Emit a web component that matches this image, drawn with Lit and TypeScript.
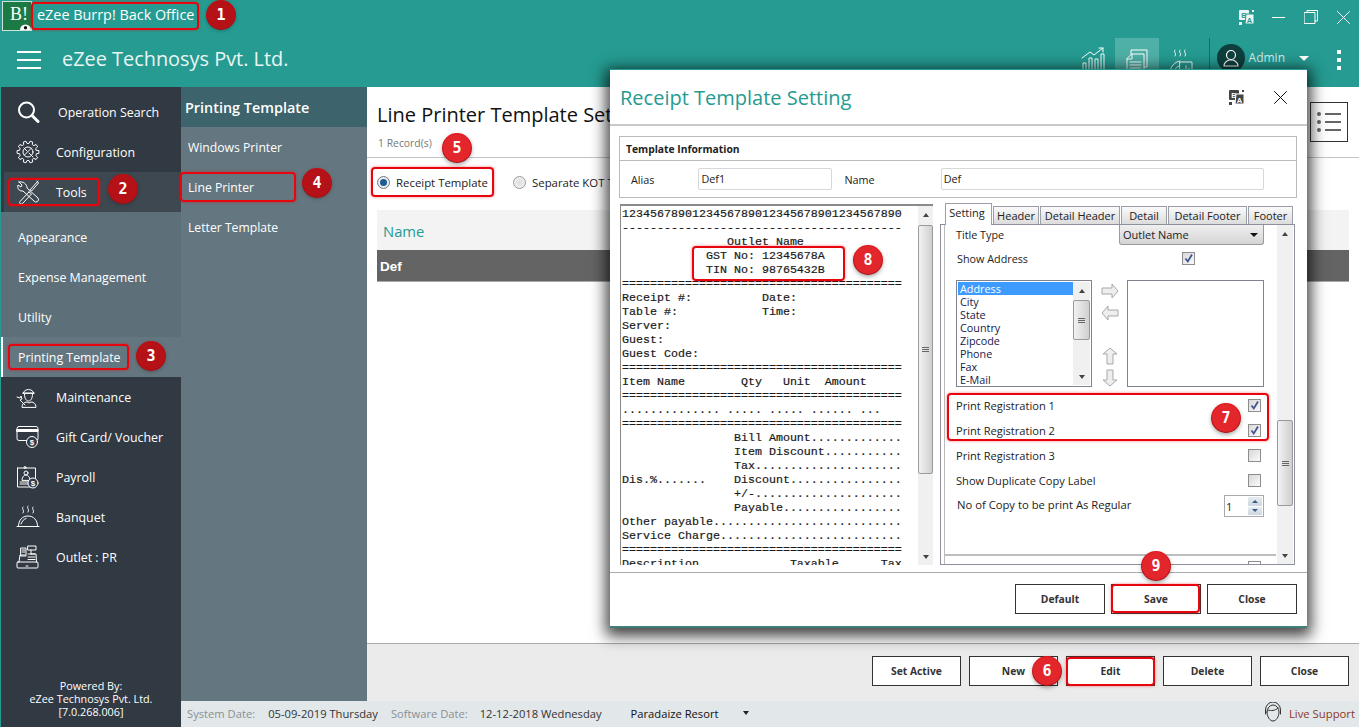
import { LitElement, html, css, svg } from "lit";
import { customElement } from "lit/decorators.js";

const eq = "=".repeat(40);
const RECEIPT = [
  "1234567890123456789012345678901234567890",
  "-".repeat(40),
  "               Outlet Name",
  "            GST No: 12345678A",
  "            TIN No: 98765432B",
  eq,
  "Receipt #:          Date:",
  "Table #:            Time:",
  "Server:",
  "Guest:",
  "Guest Code:",
  eq,
  "Item Name        Qty   Unit  Amount",
  eq,
  ".............. ..... ..... ...... ...",
  eq,
  "                Bill Amount.............",
  "                Item Discount...........",
  "                Tax.....................",
  "Dis.%.......    Discount................",
  "                +/-.....................",
  "                Payable.................",
  "Other payable...........................",
  "Service Charge..........................",
  eq,
  "Description             Taxable      Tax",
].join("\n");

const NAV_TOP = ["Operation Search", "Configuration", "Tools"];
const NAV_SUB = ["Appearance", "Expense Management", "Utility"];
const NAV_BOTTOM = ["Maintenance", "Gift Card/ Voucher", "Payroll", "Banquet", "Outlet : PR"];
const LIST = ["Address", "City", "State", "Country", "Zipcode", "Phone", "Fax", "E-Mail"];
const TABS = ["Setting", "Header", "Detail Header", "Detail", "Detail Footer", "Footer"];

const MARKS = [
  { n: 1, x: 31, y: 2, w: 168, h: 28, cx: 221, cy: 15, dark: true },
  { n: 2, x: 8, y: 178, w: 92, h: 28, cx: 123, cy: 189, dark: true },
  { n: 3, x: 8, y: 344, w: 121, h: 26, cx: 151, cy: 356, dark: true },
  { n: 4, x: 180, y: 172, w: 116, h: 30, cx: 317, cy: 183, dark: true },
  { n: 5, x: 371, y: 167, w: 123, h: 30, cx: 457, cy: 148, dark: false },
  { n: 6, x: 1066, y: 657, w: 89, h: 29, cx: 1047, cy: 671, dark: false },
  { n: 7, x: 947, y: 393, w: 322, h: 48, cx: 1226, cy: 418, dark: false },
  { n: 8, x: 692, y: 246, w: 153, h: 35, cx: 868, cy: 260, dark: false },
  { n: 9, x: 1111, y: 584, w: 89, h: 29, cx: 1156, cy: 566, dark: false },
];

function gearPath(cx: number, cy: number, r1: number, r2: number, teeth: number) {
  const pts: string[] = [];
  const step = (Math.PI * 2) / teeth;
  for (let i = 0; i < teeth; i++) {
    const a = i * step;
    [[-0.32, r1], [-0.2, r2], [0.2, r2], [0.32, r1]].forEach(([o, r]) => {
      const t = a + (o as number) * step;
      pts.push(`${(cx + (r as number) * Math.cos(t)).toFixed(2)},${(cy + (r as number) * Math.sin(t)).toFixed(2)}`);
    });
  }
  return pts.join(" ");
}

const ico = (w: number, h: number, body: unknown) => html`<svg class="ico" width=${w} height=${h} viewBox="0 0 ${w} ${h}">${body}</svg>`;

const ICONS: Record<string, unknown> = {
  "Operation Search": ico(24, 24, svg`<circle cx="10.5" cy="10" r="7.5" stroke-width="2"/><path d="M16 15.5l6 6" stroke-width="3"/>`),
  Configuration: ico(24, 24, svg`<polygon points=${gearPath(12, 12, 8.6, 11, 10)}/><circle cx="12" cy="12" r="5"/><path d="M8 8l3 3M13 13l4 4M15.5 8l-7 7"/>`),
  Tools: ico(24, 24, svg`<path d="M22 1l-8 9M13 12l-9 9.5a1.6 1.6 0 0 0 2.5 2l9-9.5-2.5-2zM14.5 10l1 1 7-8-1.500-2"/><path d="M3 2l3 3-1 2-3-2c-1 3 1 6 4 6l1 0 11 10a2.500 2.500 0 0 0 4-3L11 8c0-4-4-7-8-6z"/>`),
  Maintenance: ico(24, 24, svg`<path d="M7 8a6 6 0 0 1 11 0zM7 8h11M8.500 9c0 5 2 7 4 7s4-2 4-7"/><path d="M6 22c0-3 2-5 5-5l2 1 2-1c3 0 5 2 5 5zM1 12l3 1 1-2 1 3-2 1 5 5"/>`),
  "Gift Card/ Voucher": ico(24, 24, svg`<rect x="1" y="1.500" width="21" height="14" rx="2"/><rect x="1" y="4.500" width="21" height="2" fill="#fff"/><circle cx="16" cy="17" r="5.500" fill="#313942"/><text x="16" y="20" class="ico-t">$</text>`),
  Payroll: ico(24, 24, svg`<path d="M1.500 3h18v11M1.500 3v19h14"/><circle cx="9" cy="2.500" r="1"/><circle cx="10" cy="8" r="2"/><path d="M6 15c0-3 2-5 4-5s4 2 4 5zM4 17h9M4 19h9"/><circle cx="17" cy="18" r="5" fill="#313942"/><text x="17" y="21" class="ico-t">$</text>`),
  Banquet: ico(24, 24, svg`<path d="M1 21.500h22M2.500 21c0-6 4-10 9.500-10s9.500 4 9.500 10M5 19c1-3 3-5 5-5.500"/><path d="M7 2c-2 2 2 3 0 6M12 1c-2 2 2 3 0 6M17 2c-2 2 2 3 0 6"/>`),
  "Outlet : PR": ico(24, 24, svg`<rect x="1" y="17" width="21" height="6" rx="1"/><path d="M3 17l1-7h5M20.500 17L20 9h-5M10 21h2"/><rect x="5" y="3" width="5" height="8"/><rect x="12" y="1" width="8" height="4"/><path d="M15 5v4M12 9h7M12 12h7M12 14.500h7M6 7h3M6 5h3"/>`),
};

function translateIcon(fg: string, bg: string) {
  return html`<svg class="plain" width="17" height="17" viewBox="0 0 17 17">
    <rect x="1" y="1" width="10" height="10" rx="1" fill=${fg}/>
    <text x="6" y="9" class="tr-t" fill=${bg}>B</text>
    <path d="M8 5h8v10H7z" fill=${fg} stroke=${bg} stroke-width="1"/>
    <text x="11.500" y="13.500" class="tr-t" fill=${bg}>A</text>
    <rect x="1" y="13" width="3" height="3" fill=${fg}/>
    <rect x="14" y="1" width="2" height="2" fill=${fg}/>
  </svg>`;
}

@customElement("app-root")
export class AppRoot extends LitElement {
  static styles = css`
    :host { display: block; width: 100vw; height: 100vh; overflow: hidden; position: relative; font-family: "Open Sans", "Noto Sans", sans-serif; color: #222; }
    .shell { display: grid; grid-template-rows: 87px 1fr; height: 100%; }
    svg.ico { fill: none; stroke: #fff; stroke-width: 1; stroke-linecap: round; stroke-linejoin: round; flex: none; }
    svg.plain { flex: none; display: block; }
    .ico-t { font: 700 8px "Liberation Sans", sans-serif; fill: #fff; stroke: none; text-anchor: middle; }
    .tr-t { font: 700 7.5px "Liberation Sans", sans-serif; text-anchor: middle; }

    .top { background: #259b91; color: #fff; display: flex; flex-direction: column; min-height: 0; }
    .titlebar { height: 36px; flex: none; display: flex; align-items: flex-start; padding-top: 1px; box-sizing: border-box; }
    .logo { width: 30px; height: 30px; margin-left: 2px; box-sizing: border-box; border: 1px solid #cfe3d8; background: #1c7a45; position: relative; font: 400 18px/25px "Liberation Serif", serif; text-align: left; padding-left: 7px; flex: none; }
    .logo svg { position: absolute; right: 0; bottom: 0; display: block; }
    .app-name { font-size: 14.4px; line-height: 28px; margin-left: 5px; }
    .win { margin-left: auto; display: flex; align-items: center; height: 32px; padding-right: 9px; }
    .appbar { flex: 1; min-height: 0; display: flex; align-items: flex-start; }
    .burger { margin: 15px 0 0 17px; width: 24px; display: flex; flex-direction: column; gap: 6px; }
    .burger i { display: block; height: 2px; background: #fff; }
    .company { font-size: 19.9px; line-height: 28px; margin: 9px 0 0 21px; font-weight: 400; color: #eaf6f4; }
    .tools { margin-left: auto; display: flex; align-items: flex-start; height: 100%; }
    .tool { width: 44px; height: 51px; display: flex; justify-content: center; padding-top: 9px; box-sizing: border-box; }
    .tool.on { background: #4fb0a7; height: 49px; margin-top: 2px; padding-top: 11px; }
    .tool.steam { padding-top: 13px; }
    .sep { width: 1px; height: 49px; margin: 2px 7px 0 6px; background: #1f6a66; }
    .avatar { width: 28px; height: 28px; border-radius: 50%; background: #0e3f3d; margin-top: 8px; display: flex; align-items: center; justify-content: center; }
    .admin { font-size: 12px; line-height: 16px; margin: 14px 0 0 4px; color: #d8eeeb; }
    .caret { width: 0; height: 0; border: 5px solid transparent; border-top: 5px solid #fff; border-bottom: 0; margin: 20px 0 0 14px; }
    .kebab { display: flex; flex-direction: column; gap: 4px; margin: 14px 18px 0 28px; }
    .kebab i { width: 4px; height: 4px; background: #fff; display: block; }

    .body { display: grid; grid-template-columns: 181px 186px 1fr; grid-template-rows: 1fr 26px; min-height: 0; }
    .nav { grid-row: 1 / 3; background: #313942; border-left: 1px solid #259b91; display: flex; flex-direction: column; color: #fff; padding-top: 5px; box-sizing: border-box; }
    .nav-item { height: 40px; display: flex; align-items: center; font-size: 12.4px; padding-left: 15px; gap: 16px; box-sizing: border-box; flex: none; }
    .nav-item.first { gap: 18px; }
    .nav-item.open { background: #3e4850; margin-left: 3px; padding-left: 12px; }
    .nav-subs { background: #5d6f78; padding-top: 5px; }
    .nav-sub { height: 40px; display: flex; align-items: center; padding-left: 17px; font-size: 12.4px; }
    .nav-sub.active { background: #64767f; border-left: 2px solid #fff; margin-left: 0; padding-left: 15px; }
    .nav-foot { margin-top: auto; padding-bottom: 9px; text-align: center; font-size: 10.8px; line-height: 13px; }

    .sub { background: #64767f; color: #fff; }
    .sub h2 { margin: 0; height: 40px; background: #3d636d; display: flex; align-items: center; padding-left: 4px; font-size: 14.4px; font-weight: 600; }
    .sub a { display: flex; align-items: center; height: 40px; padding-left: 7px; font-size: 12.2px; }

    .main { background: #fff; display: flex; flex-direction: column; min-width: 0; }
    .main-head { height: 71px; box-sizing: border-box; padding: 14px 10px 0 10px; border-bottom: 1px solid #c4c4c4; position: relative; }
    .main-head h1 { margin: 0; font-size: 20px; line-height: 28px; font-weight: 400; color: #111; white-space: nowrap; }
    .count { font-size: 10.4px; line-height: 14px; color: #777; margin-top: 7px; margin-left: 1px; }
    .listbtn { position: absolute; right: 11px; top: 15px; width: 38px; height: 40px; box-sizing: border-box; border: 1px solid #333; background: #fff; display: flex; align-items: center; justify-content: center; }
    .radios { display: flex; align-items: center; height: 49px; padding-left: 10px; font-size: 11.4px; gap: 6px; }
    .radio { width: 13px; height: 13px; border-radius: 50%; border: 1px solid #999; background: radial-gradient(circle, #ddd, #f8f8f8); box-sizing: border-box; flex: none; display: flex; align-items: center; justify-content: center; }
    .radio.on { border-color: #777; background: #e9eef2; }
    .radio.on i { width: 7px; height: 7px; border-radius: 50%; background: #1e5d92; display: block; }
    .radios .lbl { margin-right: 19px; }
    .tbl { margin: 3px 10px 0; }
    .tbl-h { height: 40px; background: #f3f3f3; color: #259b91; display: flex; align-items: center; padding: 2px 0 0 6px; box-sizing: border-box; font-size: 14.8px; }
    .tbl-r { height: 32px; background: #646464; color: #fff; display: flex; align-items: center; padding: 1px 0 0 3px; font: 700 13.500px "Liberation Sans", sans-serif; border-bottom: 1px solid #aaa; box-sizing: border-box; }
    .actions { margin-top: auto; height: 58px; box-sizing: border-box; background: #ebebeb; border-top: 1px solid #aaa; display: flex; justify-content: flex-end; align-items: center; gap: 8px; padding: 0 10px 3px 0; }
    .btn { width: 90px; height: 30px; box-sizing: border-box; border: 1px solid #333; background: #fff; display: flex; align-items: center; justify-content: center; font-size: 10.3px; font-weight: 700; color: #333; padding: 0; font-family: inherit; }
    .actions .btn { width: 89px; }
    .status { grid-column: 2 / 4; background: #e2e7ea; display: flex; align-items: center; font-size: 11.2px; color: #333; white-space: nowrap; padding-bottom: 2px; box-sizing: border-box; }
    .status span { flex: none; }
    .status .k { color: #8a9094; }
    .k.a { margin-left: 6px; }
    .v.a { margin-left: 13px; }
    .k.b { margin-left: 13px; }
    .v.b { margin-left: 12px; }
    .prop { margin-left: 29px; color: #111; }
    .tri { width: 0; height: 0; border: 3px solid transparent; border-top: 4px solid #222; border-bottom: 0; margin-left: 25px; flex: none; }
    .live { margin-left: auto; display: flex; align-items: center; gap: 7px; padding-right: 4px; color: #8a3a1e; font-size: 11.3px; }

    .modal { position: absolute; left: 610px; top: 69px; width: 697px; height: 559px; box-sizing: border-box; background: #fff; border-top: 1px solid #259b91; border-bottom: 2px solid #3f7f78; box-shadow: 0 4px 14px 4px rgba(0,0,0,.75); display: flex; flex-direction: column; }
    .m-head { height: 56px; flex: none; border-bottom: 2px solid #c9c9c9; display: flex; align-items: center; padding: 0 20px 0 10px; box-sizing: border-box; }
    .m-head h3 { margin: 0; color: #259b91; font-size: 20px; font-weight: 400; flex: 1; line-height: 56px; padding-top: 1px; }
    .m-head .x { margin-left: 29px; }
    .info { margin: 10px 10px 0 9px; height: 62px; flex: none; box-sizing: border-box; border: 1px solid #bbb; display: flex; flex-direction: column; font-size: 10.8px; }
    .info-t { height: 24px; flex: none; box-sizing: border-box; border-bottom: 1px solid #bbb; display: flex; align-items: center; padding-left: 6px; font-weight: 700; font-size: 10.3px; color: #222; }
    .info-f { flex: 1; display: flex; align-items: center; padding-left: 11px; }
    .inp { height: 22px; box-sizing: border-box; border: 1px solid #d8d8dc; border-radius: 2px; padding: 0 2px; font-size: 10.8px; line-height: 18px; display: flex; align-items: center; }
    .inp.alias { width: 134px; margin-left: 44px; }
    .inp.name { width: 323px; margin-left: 66px; }
    .lab2 { margin-left: 12px; }
    .split { display: flex; margin: 6px 0 0 10px; height: 362px; flex: none; }
    .preview { width: 313px; flex: none; height: 361px; box-sizing: border-box; border-top: 2px solid #8a8a8a; border-left: 1px solid #8a8a8a; display: flex; overflow: hidden; }
    .mono { flex: 1; margin: 0; padding: 1px 0 0 1px; font: 400 11.67px/14px "Liberation Mono", monospace; color: #1a1a1a; -webkit-text-stroke: .2px #1a1a1a; white-space: pre; overflow: hidden; }
    .sb { width: 15px; flex: none; background: #f0f0f0; display: flex; flex-direction: column; align-items: stretch; }
    .sb .arr { height: 17px; flex: none; display: flex; align-items: center; justify-content: center; }
    .sb .arr i { width: 0; height: 0; border: 3px solid transparent; display: block; }
    .sb .arr.up i { border-bottom: 4px solid #444; border-top: 0; }
    .sb .arr.dn i { border-top: 4px solid #444; border-bottom: 0; }
    .sb .thumb { box-sizing: border-box; border: 1px solid #9a9a9a; border-radius: 2px; background: linear-gradient(90deg, #f2f2f2, #cfcfcf); display: flex; flex-direction: column; align-items: center; justify-content: center; gap: 1px; }
    .sb .thumb b { display: block; width: 7px; height: 1px; background: #666; }
    .setting { width: 355px; margin-left: 7px; flex: none; display: flex; flex-direction: column; height: 361px; }
    .tabs { display: flex; gap: 1px; padding-left: 5px; height: 20px; align-items: flex-end; font-size: 11px; flex: none; }
    .tab { height: 18px; box-sizing: border-box; border: 1px solid #9a9fa8; border-bottom: 0; background: linear-gradient(#fafafa, #dcdcdc); display: flex; align-items: center; justify-content: center; color: #222; padding-bottom: 1px; }
    .tab.on { height: 22px; background: #fff; margin-bottom: -1px; position: relative; padding: 0 3px 4px 0; }
    .panel { flex: 1; min-height: 0; display: flex; border: 1px solid #8d919b; overflow: hidden; padding: 0 1px 0 3px; box-sizing: border-box; }
    .form { flex: 1; min-width: 0; display: flex; flex-direction: column; font-size: 10.8px; color: #222; border-left: 1px solid #bbb; margin-right: 1px; }
    .form .row { display: flex; align-items: center; padding: 0 16px 0 11px; flex: none; }
    .row.tt { height: 20px; }
    .row.tt > span:first-child { padding-bottom: 2px; }
    .row.sa { height: 20px; margin-top: 3px; padding-left: 12px; }
    .form .row.reg { height: 25px; padding-right: 15px; padding-left: 11px; font-size: 11.1px; }
    .form .row.no { height: 24px; margin-top: 1px; padding-left: 12px; padding-right: 12px; font-size: 11.25px; }
    .row.no > span:first-child { padding-bottom: 3px; }
    .grow { flex: 1; }
    .select { width: 145px; height: 20px; margin-right: -4px; box-sizing: border-box; border: 1px solid #9a9a9a; border-top: 0; border-radius: 0 0 3px 3px; background: linear-gradient(#f0f0f0, #d4d4d4); display: flex; align-items: center; padding: 0 5px 0 3px; justify-content: space-between; font-size: 11px; }
    .select i { width: 0; height: 0; border: 4px solid transparent; border-top: 4px solid #111; border-bottom: 0; display: block; }
    .chk { width: 13px; height: 13px; box-sizing: border-box; border: 1px solid #8d8d8d; background: linear-gradient(135deg, #d8d8d8, #fafafa); display: block; flex: none; }
    .chk svg { display: block; }
    .chk.sa { margin-right: 65px; }
    .lists { display: flex; margin: 12px 0 0 11px; height: 107px; flex: none; align-items: stretch; }
    .lb { width: 136px; box-sizing: border-box; border: 1px solid #7f8390; display: flex; padding: 1px; flex: none; font-size: 10.8px; }
    .lb-items { flex: 1; display: flex; flex-direction: column; }
    .lb-items div { height: 13px; line-height: 13px; padding-left: 2px; color: #16204a; white-space: nowrap; flex: none; }
    .lb-items div.sel { background: #3d9bff; color: #fff; }
    .arrows { width: 35px; flex: none; display: flex; flex-direction: column; align-items: center; padding-top: 2px; box-sizing: border-box; }
    .lb2 { width: 137px; box-sizing: border-box; border: 1px solid #7f8390; flex: none; }
    .regs { margin-top: 6px; display: flex; flex-direction: column; }
    .spin { width: 40px; height: 22px; box-sizing: border-box; border: 1px solid #aaa; display: flex; align-items: center; justify-content: space-between; padding-left: 1px; font-size: 11px; }
    .spin-b { width: 14px; height: 18px; display: flex; flex-direction: column; gap: 1px; margin-right: 1px; }
    .spin-b span { flex: 1; background: linear-gradient(#e6ecf2, #cdd6df); display: flex; align-items: center; justify-content: center; }
    .spin-b i { width: 0; height: 0; border: 3px solid transparent; display: block; }
    .spin-b i.u { border-bottom: 3px solid #3e5a80; border-top: 0; }
    .spin-b i.d { border-top: 3px solid #3e5a80; border-bottom: 0; }
    .divider { margin-top: 36px; height: 2px; background: #bdbdbd; flex: none; }
    .next { flex: none; margin: 5px 15px 0 auto; width: 13px; height: 13px; box-sizing: border-box; border: 1px solid #8d8d8d; }
    .m-foot { margin-top: 6px; border-top: 1px solid #aaa; flex: 1; display: flex; justify-content: flex-end; gap: 6px; padding: 11px 10px 0 0; align-items: flex-start; }

    .mark { position: absolute; box-sizing: border-box; border: 2px solid #e8060e; border-radius: 4px; box-shadow: 0 0 3px rgba(232,6,14,.5); pointer-events: none; }
    .dot { position: absolute; width: 28px; height: 28px; border-radius: 50%; margin: -14px 0 0 -14px; background: #e3262c; box-shadow: 0 2px 5px rgba(0,0,0,.45), 0 0 0 1px #f01a1f; color: #fff; display: flex; align-items: center; justify-content: center; font: 700 15px "DejaVu Sans Mono", monospace; }
    .dot.dark { background: #b51217; box-shadow: 0 1px 4px rgba(0,0,0,.35), 0 0 0 1px #d50f14; }
  `;

  private sb(height: number, before: number, thumb: number, width?: number) {
    const after = height - 34 - before - thumb;
    return html`<div class="sb" style="height:${height}px;${width ? `width:${width}px` : ""}">
      <div class="arr up"><i></i></div>
      <div style="height:${before}px;flex:none"></div>
      <div class="thumb" style="height:${thumb}px;flex:none"><b></b><b></b><b></b></div>
      <div style="height:${after}px;flex:none"></div>
      <div class="arr dn"><i></i></div>
    </div>`;
  }

  private chk(on: boolean, extra = "") {
    return html`<span class="chk ${extra}">${on ? html`<svg width="11" height="11" viewBox="0 0 11 11"><path d="M2.500 5.500l2.300 3L9 1.500" fill="none" stroke="#43558f" stroke-width="1.800"/></svg>` : ""}</span>`;
  }

  private blockArrow(d: string) {
    return html`<svg class="plain" width="18" height="18" viewBox="0 0 18 18"><path d=${d} fill="#eee" stroke="#a8a8a8" stroke-width="1"/></svg>`;
  }

  render() {
    const tabW = [47, 46, 80, 46, 79, 45];
    return html`
      <div class="shell">
        <header class="top">
          <div class="titlebar">
            <div class="logo">B!
              <svg width="11" height="7" viewBox="0 0 13 8"><path d="M0 8a6.500 6.500 0 0 1 13 0z" fill="#fff"/><circle cx="6.500" cy="5.500" r="2" fill="#111"/></svg>
            </div>
            <div class="app-name">eZee Burrp! Back Office</div>
            <div class="win">
              ${translateIcon("#eef6f5", "#259b91")}
              <svg class="ico" width="13" height="13" viewBox="0 0 13 13" style="margin-left:17px"><path d="M0 6.500h13"/></svg>
              <svg class="ico" width="14" height="14" viewBox="0 0 14 14" style="margin-left:19px"><rect x=".5" y="2.500" width="10.500" height="11"/><path d="M3 2.500V.5h10.500V11H11"/></svg>
              <svg class="ico" width="13" height="13" viewBox="0 0 13 13" style="margin-left:19px"><path d="M.5.5l12 12M12.500.5l-12 12"/></svg>
            </div>
          </div>
          <div class="appbar">
            <div class="burger"><i></i><i></i><i></i></div>
            <div class="company">eZee Technosys Pvt. Ltd.</div>
            <div class="tools">
              <div class="tool"><svg class="ico" width="24" height="24" viewBox="0 0 24 24"><path d="M1 13l8-6 4 3 9-7M18 3h4v4"/><path d="M2 24v-6h3v6M8 24V13h3v11M14 24V14h3v10M20 24V9h3v15"/></svg></div>
              <div class="tool on"><svg class="ico" width="22" height="24" viewBox="0 0 22 24"><path d="M5 5V1h16v17h-3"/><path d="M6 5h12v19H1V10z"/><path d="M6 5v5H1M4 13h11M4 16h11M4 19h11"/></svg></div>
              <div class="tool steam"><svg class="ico" width="24" height="24" viewBox="0 0 24 24"><path d="M6 1c-2 2 2 3 0 6M11 1c-2 2 2 3 0 6M16 1c-2 2 2 3 0 6M1 24c0-6 4-11 10-12M5 24c0-3 2-6 5-7"/><rect x="11" y="13" width="12" height="11"/><path d="M14 24v-4M17 24v-7M20 24v-5"/></svg></div>
              <div class="sep"></div>
              <div class="avatar"><svg class="ico" width="16" height="18" viewBox="0 0 16 18"><circle cx="8" cy="6" r="4.500" stroke-width="1.200"/><path d="M1 17c0-4 3-5 5-6h4c2 1 5 2 5 6z" stroke-width="1.200"/></svg></div>
              <div class="admin">Admin</div>
              <div class="caret"></div>
              <div class="kebab"><i></i><i></i><i></i></div>
            </div>
          </div>
        </header>
        <div class="body">
          <nav class="nav">
            ${NAV_TOP.map((n, i) => html`<div class="nav-item ${i === 0 ? "first" : ""} ${n === "Tools" ? "open" : ""}">${ICONS[n]}<span>${n}</span></div>`)}
            <div class="nav-subs">${NAV_SUB.map((n) => html`<div class="nav-sub">${n}</div>`)}</div>
            <div class="nav-sub active">Printing Template</div>
            ${NAV_BOTTOM.map((n) => html`<div class="nav-item">${ICONS[n]}<span>${n}</span></div>`)}
            <div class="nav-foot">Powered By:<br />eZee Technosys Pvt. Ltd.<br />[7.0.268.006]</div>
          </nav>
          <aside class="sub">
            <h2>Printing Template</h2>
            <a>Windows Printer</a><a>Line Printer</a><a>Letter Template</a>
          </aside>
          <main class="main">
            <div class="main-head">
              <h1>Line Printer Template Setting</h1>
              <div class="count">1 Record(s)</div>
              <div class="listbtn"><svg width="26" height="22" viewBox="0 0 26 22"><g fill="#666"><circle cx="3" cy="3" r="2"/><circle cx="3" cy="11" r="2"/><circle cx="3" cy="19" r="2"/><rect x="9" y="2" width="16" height="2"/><rect x="9" y="10" width="16" height="2"/><rect x="9" y="18" width="16" height="2"/></g></svg></div>
            </div>
            <div class="radios">
              <span class="radio on"><i></i></span><span class="lbl">Receipt Template</span>
              <span class="radio"></span><span class="lbl">Separate KOT Template</span>
            </div>
            <div class="tbl"><div class="tbl-h">Name</div><div class="tbl-r">Def</div></div>
            <div class="actions">
              ${["Set Active", "New", "Edit", "Delete", "Close"].map((b) => html`<button class="btn">${b}</button>`)}
            </div>
          </main>
          <footer class="status">
            <span class="k a">System Date:</span><span class="v a">05-09-2019 Thursday</span>
            <span class="k b">Software Date:</span><span class="v b">12-12-2018 Wednesday</span>
            <span class="prop">Paradaize Resort</span><span class="tri"></span>
            <div class="live">
              <svg class="ico" width="18" height="22" viewBox="0 0 18 22" style="stroke:#333"><path d="M3 10a6 7 0 0 1 12 0c0 5-3 9-6 9s-6-4-6-9z"/><path d="M1.500 12V8a7.500 8 0 0 1 15 0v4M4 8c3 1 7 1 10-2"/></svg>
              <span>Live Support</span>
            </div>
          </footer>
        </div>
      </div>

      <section class="modal">
        <div class="m-head">
          <h3>Receipt Template Setting</h3>
          ${translateIcon("#444", "#fff")}
          <svg class="ico x" width="13" height="13" viewBox="0 0 13 13" style="stroke:#111"><path d="M.5.5l12 12M12.500.5l-12 12"/></svg>
        </div>
        <div class="info">
          <div class="info-t">Template Information</div>
          <div class="info-f">
            <span>Alias</span><span class="inp alias">Def1</span>
            <span class="lab2">Name</span><span class="inp name">Def</span>
          </div>
        </div>
        <div class="split">
          <div class="preview">
            <pre class="mono">${RECEIPT}</pre>
            ${this.sb(359, 2, 249)}
          </div>
          <div class="setting">
            <div class="tabs">
              ${TABS.map((t, i) => html`<div class="tab ${i === 0 ? "on" : ""}" style="width:${tabW[i]}px">${t}</div>`)}
            </div>
            <div class="panel">
              <div class="form">
                <div class="row tt"><span>Title Type</span><span class="grow"></span><div class="select"><span>Outlet Name</span><i></i></div></div>
                <div class="row sa"><span>Show Address</span><span class="grow"></span>${this.chk(true, "sa")}</div>
                <div class="lists">
                  <div class="lb">
                    <div class="lb-items">${LIST.map((l, i) => html`<div class=${i === 0 ? "sel" : ""}>${l}</div>`)}</div>
                    ${this.sb(103, 1, 40, 17)}
                  </div>
                  <div class="arrows">
                    ${this.blockArrow("M1 6h10V2l6 7-6 7v-4H1z")}
                    <span style="height:4px"></span>
                    ${this.blockArrow("M17 6H7V2L1 9l6 7v-4h10z")}
                    <span style="height:25px"></span>
                    ${this.blockArrow("M6 17V7H2l7-6 7 6h-4v10z")}
                    <span style="height:4px"></span>
                    ${this.blockArrow("M6 1v10H2l7 6 7-6h-4V1z")}
                  </div>
                  <div class="lb2"></div>
                </div>
                <div class="regs">
                  ${[["Print Registration 1", true], ["Print Registration 2", true], ["Print Registration 3", false], ["Show Duplicate Copy Label", false]].map(
                    ([l, on]) => html`<div class="row reg"><span>${l}</span><span class="grow"></span>${this.chk(on as boolean)}</div>`
                  )}
                </div>
                <div class="row no"><span>No of Copy to be print As Regular</span><span class="grow"></span>
                  <div class="spin"><span>1</span><div class="spin-b"><span><i class="u"></i></span><span><i class="d"></i></span></div></div>
                </div>
                <div class="divider"></div>
                <div class="next"></div>
              </div>
              ${this.sb(339, 178, 86, 16)}
            </div>
          </div>
        </div>
        <div class="m-foot">
          <button class="btn">Default</button><button class="btn">Save</button><button class="btn">Close</button>
        </div>
      </section>

      ${MARKS.map((m) => html`
        <div class="mark" style="left:${m.x}px;top:${m.y}px;width:${m.w}px;height:${m.h}px"></div>
        <div class="dot ${m.dark ? "dark" : ""}" style="left:${m.cx}px;top:${m.cy}px">${m.n}</div>`)}
    `;
  }
}
